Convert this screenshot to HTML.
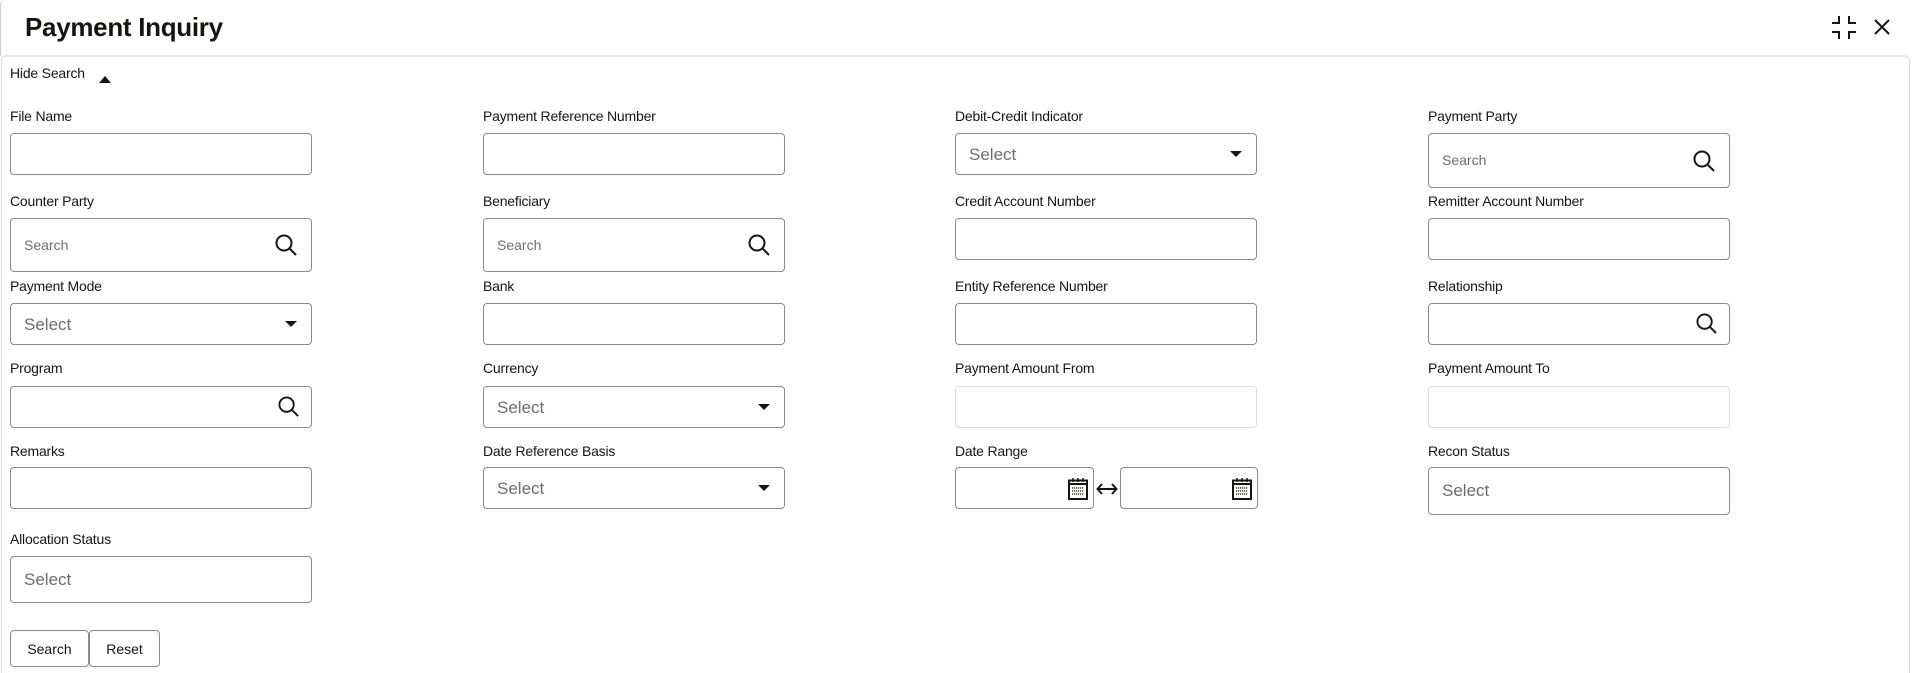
<!DOCTYPE html>
<html style="width:1913px;height:673px;overflow:hidden"><head><style>
*{box-sizing:border-box;margin:0;padding:0}
body{width:1913px;height:673px;background:#fff;font-family:"Liberation Sans",sans-serif;color:#161513;position:relative;overflow:hidden}
.a{position:absolute}
.title{left:25px;top:12px;font-size:26px;font-weight:bold;letter-spacing:-0.3px}
.hdr{left:0;top:0;width:1913px;height:56px;border-left:1px solid #ccc;border-top-left-radius:6px}
.panel{left:1px;top:55px;width:1909px;height:618px;border:1px solid #ddd;border-bottom:none;border-top:2px solid #e6e6e6;border-radius:6px 6px 0 0}
.lbl{font-size:14px;color:#161513;letter-spacing:-0.2px}
.box{border:1px solid #8a8a8a;border-radius:4px;width:302px;background:#fff}
.dis{border-color:#ddd}
.ph{position:absolute;left:13px;color:#6d6d6d}
.sel{font-size:17px}
.srch{font-size:14px}
.caret{position:absolute;right:14px;width:0;height:0;border-left:6px solid transparent;border-right:6px solid transparent;border-top:6px solid #161513}
.btn{border:1px solid #8a8a8a;border-radius:4px;height:37px;font-size:14px;display:flex;align-items:center;justify-content:center;background:#fff}
</style></head><body>
<div class="a hdr"></div>
<div class="a title">Payment Inquiry</div>
<svg class="a" style="left:1830px;top:15px" width="28" height="25" viewBox="0 0 28 25" fill="none" stroke="#161513" stroke-width="2">
<path d="M2 8h7V1M19 1v7h7M2 17h7v7M26 17h-7v7"/></svg>
<svg class="a" style="left:1873px;top:18px" width="18" height="18" viewBox="0 0 18 18" stroke="#161513" stroke-width="2"><path d="M2 2L16 16M16 2L2 16"/></svg>
<div class="a panel"></div>
<div class="a lbl" style="left:10px;top:65px">Hide Search</div>
<div class="a" style="left:99px;top:76px;width:0;height:0;border-left:6px solid transparent;border-right:6px solid transparent;border-bottom:7px solid #161513"></div>

<div class="a lbl" style="left:10px;top:108px">File Name</div>
<div class="a box" style="left:10px;top:133px;height:42px"></div>
<div class="a lbl" style="left:483px;top:108px">Payment Reference Number</div>
<div class="a box" style="left:483px;top:133px;height:42px"></div>
<div class="a lbl" style="left:955px;top:108px">Debit-Credit Indicator</div>
<div class="a box" style="left:955px;top:133px;height:42px"><span class="ph sel" style="top:11px">Select</span><span class="caret" style="top:17px"></span></div>
<div class="a lbl" style="left:1428px;top:108px">Payment Party</div>
<div class="a box" style="left:1428px;top:133px;height:55px"><span class="ph srch" style="top:18px">Search</span>
<svg class="a" style="right:14px;top:16px" width="22" height="22" viewBox="0 0 22 22" fill="none" stroke="#161513" stroke-width="2"><circle cx="9" cy="9" r="7.5"/><path d="M14.5 14.5L21 21"/></svg></div>

<div class="a lbl" style="left:10px;top:193px">Counter Party</div>
<div class="a box" style="left:10px;top:218px;height:54px"><span class="ph srch" style="top:18px">Search</span>
<svg class="a" style="right:14px;top:15px" width="22" height="22" viewBox="0 0 22 22" fill="none" stroke="#161513" stroke-width="2"><circle cx="9" cy="9" r="7.5"/><path d="M14.5 14.5L21 21"/></svg></div>
<div class="a lbl" style="left:483px;top:193px">Beneficiary</div>
<div class="a box" style="left:483px;top:218px;height:54px"><span class="ph srch" style="top:18px">Search</span>
<svg class="a" style="right:14px;top:15px" width="22" height="22" viewBox="0 0 22 22" fill="none" stroke="#161513" stroke-width="2"><circle cx="9" cy="9" r="7.5"/><path d="M14.5 14.5L21 21"/></svg></div>
<div class="a lbl" style="left:955px;top:193px">Credit Account Number</div>
<div class="a box" style="left:955px;top:218px;height:42px"></div>
<div class="a lbl" style="left:1428px;top:193px">Remitter Account Number</div>
<div class="a box" style="left:1428px;top:218px;height:42px"></div>

<div class="a lbl" style="left:10px;top:278px">Payment Mode</div>
<div class="a box" style="left:10px;top:303px;height:42px"><span class="ph sel" style="top:11px">Select</span><span class="caret" style="top:17px"></span></div>
<div class="a lbl" style="left:483px;top:278px">Bank</div>
<div class="a box" style="left:483px;top:303px;height:42px"></div>
<div class="a lbl" style="left:955px;top:278px">Entity Reference Number</div>
<div class="a box" style="left:955px;top:303px;height:42px"></div>
<div class="a lbl" style="left:1428px;top:278px">Relationship</div>
<div class="a box" style="left:1428px;top:303px;height:42px">
<svg class="a" style="right:12px;top:9px" width="21" height="21" viewBox="0 0 22 22" fill="none" stroke="#161513" stroke-width="2"><circle cx="9" cy="9" r="7.5"/><path d="M14.5 14.5L21 21"/></svg></div>

<div class="a lbl" style="left:10px;top:360px">Program</div>
<div class="a box" style="left:10px;top:386px;height:42px">
<svg class="a" style="right:12px;top:9px" width="21" height="21" viewBox="0 0 22 22" fill="none" stroke="#161513" stroke-width="2"><circle cx="9" cy="9" r="7.5"/><path d="M14.5 14.5L21 21"/></svg></div>
<div class="a lbl" style="left:483px;top:360px">Currency</div>
<div class="a box" style="left:483px;top:386px;height:42px"><span class="ph sel" style="top:11px">Select</span><span class="caret" style="top:17px"></span></div>
<div class="a lbl" style="left:955px;top:360px">Payment Amount From</div>
<div class="a box dis" style="left:955px;top:386px;height:42px"></div>
<div class="a lbl" style="left:1428px;top:360px">Payment Amount To</div>
<div class="a box dis" style="left:1428px;top:386px;height:42px"></div>

<div class="a lbl" style="left:10px;top:443px">Remarks</div>
<div class="a box" style="left:10px;top:467px;height:42px"></div>
<div class="a lbl" style="left:483px;top:443px">Date Reference Basis</div>
<div class="a box" style="left:483px;top:467px;height:42px"><span class="ph sel" style="top:11px">Select</span><span class="caret" style="top:17px"></span></div>
<div class="a lbl" style="left:955px;top:443px">Date Range</div>
<div class="a box" style="left:955px;top:467px;height:42px;width:139px">
<svg class="a" style="right:5px;top:9px" width="20" height="23" viewBox="0 0 20 23" fill="none" stroke="#161513"><rect x="1" y="3.5" width="18" height="18.5" stroke-width="2"/><path d="M1 7h18" stroke-width="2"/><path d="M5 1v4M10 1v4M15 1v4" stroke-width="1.5"/><path d="M4 11h12M4 14h12M4 17h12" stroke-width="1.3" stroke-dasharray="1.2 0.8"/></svg></div>
<svg class="a" style="left:1096px;top:482px" width="22" height="14" viewBox="0 0 22 14" fill="none" stroke="#161513" stroke-width="2"><path d="M2 7h18M6 2L1.5 7L6 12M16 2L20.5 7L16 12"/></svg>
<div class="a box" style="left:1120px;top:467px;height:42px;width:138px">
<svg class="a" style="right:5px;top:9px" width="20" height="23" viewBox="0 0 20 23" fill="none" stroke="#161513"><rect x="1" y="3.5" width="18" height="18.5" stroke-width="2"/><path d="M1 7h18" stroke-width="2"/><path d="M5 1v4M10 1v4M15 1v4" stroke-width="1.5"/><path d="M4 11h12M4 14h12M4 17h12" stroke-width="1.3" stroke-dasharray="1.2 0.8"/></svg></div>
<div class="a lbl" style="left:1428px;top:443px">Recon Status</div>
<div class="a box" style="left:1428px;top:467px;height:48px"><span class="ph sel" style="top:13px">Select</span></div>

<div class="a lbl" style="left:10px;top:531px">Allocation Status</div>
<div class="a box" style="left:10px;top:556px;height:47px"><span class="ph sel" style="top:13px">Select</span></div>

<div class="a btn" style="left:10px;top:630px;width:79px">Search</div>
<div class="a btn" style="left:89px;top:630px;width:71px">Reset</div>
</body></html>
